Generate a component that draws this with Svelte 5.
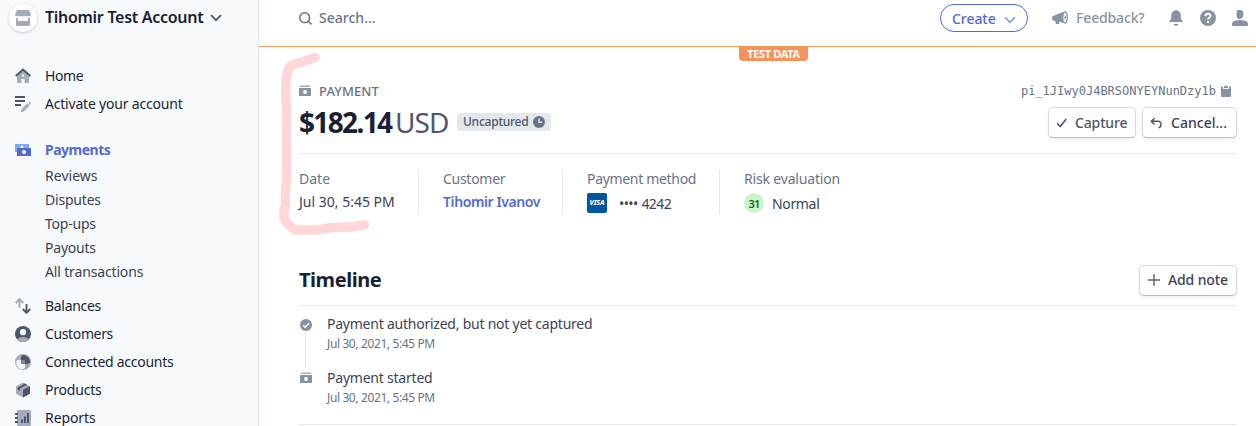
<script>
  const top = [
    { icon: 'home', label: 'Home', ls: -0.42 },
    { icon: 'edit', label: 'Activate your account', ls: -0.2 },
  ];
  const subs = [
    { label: 'Reviews', ls: 0.03 },
    { label: 'Disputes', ls: -0.2 },
    { label: 'Top-ups', ls: -0.22 },
    { label: 'Payouts', ls: -0.22 },
    { label: 'All transactions', ls: -0.15 },
  ];
  const rest = [
    { icon: 'balances', label: 'Balances', ls: -0.3 },
    { icon: 'customers', label: 'Customers', ls: -0.37 },
    { icon: 'connected', label: 'Connected accounts', ls: -0.27 },
    { icon: 'products', label: 'Products', ls: -0.2 },
    { icon: 'reports', label: 'Reports', ls: -0.08 },
  ];
  const events = [
    { icon: 'check', title: 'Payment authorized, but not yet captured', ls: -0.235 },
    { icon: 'cash', title: 'Payment started', ls: -0.22 },
  ];
</script>

{#snippet icon(name)}
  <svg class="icon" width="16" height="16" viewBox="0 0 16 16" fill="#a3acb9">
    {#if name === 'home'}
      <path d="M2 7.500 8 2l6 5.500V14a1 1 0 0 1-1 1H9.500v-4H6.500v4H3a1 1 0 0 1-1-1z" />
      <path d="M7 6.500h2v2H7z" fill="#f7fafc" />
      <path d="M.7 8 8 1.600 15.300 8" fill="none" stroke="#4f566b" stroke-width="1.900" />
    {:else if name === 'edit'}
      <path d="M0 0h10v2H0zM0 4h10v2H0zM0 8h6v2H0z" fill="#4f566b" />
      <path d="m6.500 13.300 6-6 2.200 2.200-6 6L6 16zM13.200 6.600l.8-.7q.5-.4 1 .1l.9.900q.4.500 0 1l-.7.800z" />
    {:else if name === 'payments'}
      <path d="M0 2h14v8H0z" fill="#7da8f7" />
      <circle cx="7" cy="5" r="1.500" fill="#f7fafc" />
      <rect x="2" y="6" width="14" height="8" rx=".6" fill="#5469d4" />
      <circle cx="9" cy="10" r="2" fill="#f7fafc" />
    {:else if name === 'balances'}
      <path d="M4.500 10V1.500M.7 5l3.800-3.800L8.300 5" fill="none" stroke="#a3acb9" stroke-width="1.900" />
      <path d="M11.500 6v8.500M7.700 11l3.800 3.800 3.800-3.800" fill="none" stroke="#4f566b" stroke-width="1.900" />
    {:else if name === 'customers'}
      <circle cx="8" cy="8" r="8" fill="#4f566b" />
      <path d="M2 13.300Q5 11 8 11t6 2.300A8 8 0 0 1 2 13.300" />
      <circle cx="8" cy="6.200" r="3.100" fill="#f7fafc" />
    {:else if name === 'connected'}
      <circle cx="8" cy="8" r="8" />
      <path d="M7.500 1a7 7 0 0 1 7.500 8Q12 10.500 10 10V6H6Q5.500 2.500 7.500 1" fill="#4f566b" />
      <path d="M1.200 7A5 5 0 0 1 6 6v4h4v4a5 5 0 0 1-4.500 1Q1 13 1.200 7" fill="#f7fafc" />
      <path d="M6 6h4v4H6z" fill="#7f879a" />
    {:else if name === 'products'}
      <path d="M1 4.300 8 .5l7 3.800v7.400L8 15.500l-7-3.800z" />
      <path d="M8 7.800 15 4v7.700l-7 3.900zM2.800 5.400 10 1.500l2.200 1.200L5 6.600v2.400L2.800 7.800z" fill="#4f566b" />
    {:else}
      <rect x="2" y="0" width="14" height="16" rx="1.500" />
      <path d="M6 9.500h2V13H6zM9 6.500h2V13H9zM12 3h2v10h-2zM0 3h3v2H0zM0 7h3v2H0zM0 11h3v2H0z" fill="#4f566b" />
    {/if}
  </svg>
{/snippet}

{#snippet cash()}
  <svg width="12" height="12" viewBox="0 0 12 12" fill="#8792a2">
    <path d="M.8.500h10.400V2H.8z" opacity=".75" />
    <path fill-rule="evenodd" d="M.6 3h10.800q.6 0 .6.600v6.800q0 .600-.6.600H.6q-.6 0-.6-.600V3.600Q0 3 .6 3M6 5a2 2 0 1 0 0 4 2 2 0 0 0 0-4" />
  </svg>
{/snippet}

{#snippet entry(item)}
  <a class="row">{@render icon(item.icon)}<span style:letter-spacing="{item.ls}px">{item.label}</span></a>
{/snippet}

<div class="page">
  <aside>
    <div class="account">
      <span class="logo">
        <svg width="16" height="16" viewBox="0 0 16 16" fill="#a3acb9">
          <path d="M2 0h12l2 4.500a2 2 0 0 1-3.300 1.300 2.300 2.300 0 0 1-3.100 0 2.300 2.300 0 0 1-3.200 0 2.300 2.300 0 0 1-3.100 0A2 2 0 0 1 0 4.500z" />
          <path d="M1 8h2v3h10V8h2v7a1 1 0 0 1-1 1H2a1 1 0 0 1-1-1z" />
        </svg>
      </span>
      <b>Tihomir Test Account</b>
      <svg width="12" height="8" viewBox="0 0 12 8" fill="none" stroke="#4f566b" stroke-width="1.700"><path d="m1 1.200 5 5 5-5" /></svg>
    </div>
    <nav>
      {#each top as item}{@render entry(item)}{/each}
      <a class="row active">{@render icon('payments')}<span>Payments</span></a>
      <div class="subs">
        {#each subs as s}<a style:letter-spacing="{s.ls}px">{s.label}</a>{/each}
      </div>
      {#each rest as item}{@render entry(item)}{/each}
    </nav>
  </aside>

  <main>
    <header>
      <div class="search">
        <svg width="13" height="13" viewBox="0 0 13 13" fill="none" stroke="#697386" stroke-width="1.500"><circle cx="5.700" cy="5.700" r="4.900" /><path d="m9.200 9.200 3.200 3.200" /></svg>
        <span>Search...</span>
      </div>
      <button class="create"><span>Create</span>
        <svg width="12" height="8" viewBox="0 0 12 8" fill="none" stroke="#6c8eef" stroke-width="1.400"><path d="m1 1.200 5 5 5-5" /></svg>
      </button>
      <div class="feedback">
        <svg width="16" height="14" viewBox="0 0 16 14" fill="#8792a2">
          <path d="M11 1v11L7 10.500l.5 2.500H4l-.8-3L.5 9Q-.3 7 .5 5.200z" />
          <ellipse cx="13" cy="6.500" rx="2.200" ry="5.500" fill="#fff" stroke="#8792a2" stroke-width="1.300" />
          <path d="M12.500 4.500q1.500 0 1.500 2t-1.500 2z" />
        </svg>
        <span>Feedback?</span>
      </div>
      <svg class="bell" width="14" height="16" viewBox="0 0 14 16" fill="#8792a2"><path d="M7 0a1.500 1.500 0 0 1 1.300.8A4.600 4.600 0 0 1 11.800 5v3.500l1.700 2.300q.5 1.200-.8 1.200H1.300q-1.300 0-.8-1.200l1.700-2.300V5A4.600 4.600 0 0 1 5.700.8 1.500 1.500 0 0 1 7 0M4.700 14h4.600Q8.500 16 7 16t-2.300-2" /></svg>
      <svg class="help" width="16" height="16" viewBox="0 0 16 16"><circle cx="8" cy="8" r="8" fill="#8792a2" /><path d="M5.400 6.200Q5.600 3.800 8 3.800t2.500 2.100Q10.500 7 9.200 7.700 8 8.400 8 9.500" fill="none" stroke="#fff" stroke-width="1.900" /><circle cx="8" cy="12" r="1.200" fill="#fff" /></svg>
      <svg width="16" height="16" viewBox="0 0 16 16" fill="#8792a2"><path d="M8 0q3.500 0 3.500 4T8 9 4.500 4 8 0M0 14q0-2.500 3-3.300Q8 9.500 13 10.700q3 .8 3 3.300v1q0 1-1 1H1q-1 0-1-1z" /></svg>
      <div class="test">TEST DATA</div>
    </header>

    <div class="content">
      <div class="kicker">
        {@render cash()}<span class="kind">PAYMENT</span>
        <code>pi_1JIwy0J4BRSONYEYNunDzy1b</code>
        <svg width="10" height="12" viewBox="0 0 10 12"><path d="M1 1.500h8q1 0 1 1V11q0 1-1 1H1q-1 0-1-1V2.500q0-1 1-1" fill="#8792a2" /><path d="M2 1v3h6V1" fill="#fff" /><path d="M3 1.200h1Q5-.8 6 1.200h1V3H3z" fill="#8792a2" /></svg>
      </div>
      <div class="amount">
        <strong>$182.14</strong><span class="usd">USD</span>
        <span class="badge"><span>Uncaptured</span>
          <svg width="12" height="12" viewBox="0 0 12 12"><circle cx="6" cy="6" r="6" fill="#697386" /><path d="M6 2.500v3.700h3" fill="none" stroke="#e3e8ee" stroke-width="1.500" /></svg>
        </span>
        <button class="btn capture">
          <svg width="12" height="12" viewBox="0 0 12 12" fill="none" stroke="#4f566b" stroke-width="1.700"><path d="m1.300 6.200 2.900 3.300L10.300 2" /></svg>
          <span>Capture</span>
        </button>
        <button class="btn cancel">
          <svg width="12" height="12" viewBox="0 0 12 12" fill="none" stroke="#4f566b" stroke-width="1.500"><path d="M4.500 1.200 1.300 4.300l3.200 3.200M1.300 4.300h6.400q3.300 0 3.300 3.200v0q0 2.700-2.500 3.200" /></svg>
          <span>Cancel...</span>
        </button>
      </div>

      <div class="facts">
        <div class="fact date"><span class="name">Date</span><span class="val">Jul 30, 5:45 PM</span></div>
        <div class="fact customer"><span class="name">Customer</span><b>Tihomir Ivanov</b></div>
        <div class="fact method"><span class="name">Payment method</span>
          <div class="line"><span class="visa">VISA</span><span class="val">•••• 4242</span></div></div>
        <div class="fact risk"><span class="name">Risk evaluation</span>
          <div class="line"><span class="score">31</span><span class="val">Normal</span></div></div>
      </div>

      <div class="timeline-head">
        <h2>Timeline</h2>
        <button class="btn note">
          <svg width="12" height="12" viewBox="0 0 12 12" fill="none" stroke="#5b6278" stroke-width="1.400"><path d="M0 6h12M6 0v12" /></svg>
          <span>Add note</span>
        </button>
      </div>
      <div class="events">
        {#each events as e, i}
          <div class="event">
            <div class="rail">
              {#if e.icon === 'check'}
                <svg width="12" height="12" viewBox="0 0 12 12"><circle cx="6" cy="6" r="6" fill="#8792a2" /><path d="m3.200 6.200 2 2 3.800-4" fill="none" stroke="#fff" stroke-width="1.600" /></svg>
              {:else}{@render cash()}{/if}
              {#if i === 0}<i></i>{/if}
            </div>
            <div class="text"><span style:letter-spacing="{e.ls}px">{e.title}</span><time>Jul 30, 2021, 5:45 PM</time></div>
          </div>
        {/each}
      </div>
    </div>
  </main>

  <svg class="marker" width="100" height="190" viewBox="276 50 100 190" fill="none" stroke="#ffd7d8" stroke-width="9.500" stroke-linecap="round" stroke-linejoin="round">
    <path d="M315 57.500 308 60 291 65.500 287.500 71 286 80 285.700 98 286.500 103V184L285.500 190V205L284 211V218L288 224 295 230H316L332 227.500 352 227 360 226 364.500 224.500" />
  </svg>
</div>

<style>
  :global(body) { background: #fff; overflow: hidden; }
  .page { display: flex; position: relative; width: 1256px; height: 426px; overflow: hidden; font: 14px/20px 'Noto Sans', sans-serif; color: #3c4257; }
  svg { display: block; flex: none; }
  span, b, code, a { white-space: nowrap; }
  button { font: inherit; color: inherit; }
  .marker { position: absolute; left: 276px; top: 50px; pointer-events: none; }
  aside { box-sizing: border-box; flex: none; width: 259px; background: #f7fafc; border-right: 1px solid #e3e8ee; color: #1a1f36; }
  .account { display: flex; align-items: center; height: 36px; padding-left: 9px; }
  .logo { display: grid; place-items: center; width: 28px; height: 28px; margin-top: -1px; border-radius: 50%; background: #fff; box-shadow: 0 1px 3px rgba(60, 66, 87, .25); }
  .account b { width: 157px; margin: -2px 8px 0; font-size: 16px; font-weight: 580; letter-spacing: -.29px; }
  .account > svg { margin-top: -1px; }
  nav { padding-top: 26px; }
  .row { display: flex; align-items: center; gap: 14px; height: 28px; padding-left: 15px; }
  .active { margin-top: 18px; color: #5469d4; font-weight: 700; letter-spacing: -.5px; }
  .subs { display: grid; grid-auto-rows: 24px; align-items: center; padding: 0 0 8px 45px; color: #3c4257; }
  .icon { margin-top: -1px; }
  main { flex: 1; min-width: 0; }
  header { display: flex; align-items: center; position: relative; box-sizing: border-box; height: 47px; padding: 0 8px 10px 0; border-bottom: 1px solid #f5925e; color: #697386; font-weight: 500; }
  .search { display: flex; align-items: center; gap: 7px; margin: 0 auto 0 40px; letter-spacing: .02px; }
  .create { display: flex; align-items: center; justify-content: space-between; box-sizing: border-box; width: 88px; height: 28px; padding: 2px 11px 0; border: 1px solid #5469d4; border-radius: 14px; background: #fff; color: #5469d4; font-weight: 550; letter-spacing: -.06px; }
  .create svg { margin-top: 2px; }
  .feedback { display: flex; align-items: center; gap: 8px; width: 92px; margin-left: 24px; color: #8792a2; letter-spacing: -.15px; }
  .bell { margin-left: 25px; }
  .help { margin: 0 16px 0 17px; }
  .test { position: absolute; left: 480px; top: 46px; width: 69px; height: 15px; border-radius: 0 0 4px 4px; background: #f5925e; color: #fff; font-size: 11px; font-weight: 700; line-height: 16px; letter-spacing: -.35px; text-align: center; }
  .content { padding: 33px 20px 0 40px; }
  .kicker { display: flex; align-items: center; height: 22px; padding-right: 5px; color: #697386; }
  .kicker svg { margin-top: -1px; }
  .kind { margin: -1px auto 0 8px; font-size: 13px; font-weight: 500; letter-spacing: .1px; }
  code { margin-right: 5px; font: 12px 'DejaVu Sans Mono', monospace; }
  .amount { display: flex; align-items: center; height: 41px; padding-bottom: 10px; border-bottom: 1px solid #e3e8ee; }
  strong { width: 96px; margin-top: -2px; color: #1a1f36; font-size: 28px; letter-spacing: -1.65px; }
  .usd { width: 62px; margin-top: -2px; color: #4f566b; font-size: 28px; font-weight: 370; letter-spacing: -.95px; }
  .badge { display: flex; align-items: center; justify-content: space-between; box-sizing: border-box; width: 94px; height: 18px; margin: -1px auto 0 0; padding: 0 6px; border-radius: 4px; background: #e3e8ee; color: #4f566b; font-size: 12px; font-weight: 500; letter-spacing: -.24px; }
  .btn { display: flex; align-items: center; box-sizing: border-box; height: 29px; padding: 0 7px; border: 0; border-radius: 4px; background: #fff; box-shadow: 0 0 0 1px rgba(60, 66, 87, .17), 0 1px 1px rgba(0, 0, 0, .14), 0 2px 5px rgba(60, 66, 87, .09); font-weight: 500; }
  .capture { width: 86px; margin-right: 8px; color: #4f566b; gap: 7px; letter-spacing: -.15px; }
  .cancel { width: 93px; gap: 9px; letter-spacing: .02px; }
  .note { width: 96px; gap: 9px; letter-spacing: -.12px; }
  .note svg { margin-left: 1px; margin-right: -1px; }
  .facts { display: flex; height: 45px; padding-top: 16px; }
  .fact { display: flex; flex-direction: column; gap: 3px; box-sizing: border-box; height: 44px; padding-right: 23px; margin-right: 24px; border-right: 1px solid #e3e8ee; }
  .name { margin-top: -1px; color: #697386; }
  .date { width: 120px; }
  .customer { width: 120px; letter-spacing: -.28px; }
  .customer b { color: #5469d4; font-weight: 580; letter-spacing: -.4px; }
  .method { width: 133px; gap: 4px; letter-spacing: -.32px; }
  .method .val { letter-spacing: -.58px; word-spacing: .6px; }
  .risk { gap: 4px; border: 0; letter-spacing: -.17px; }
  .risk .val { letter-spacing: -.34px; }
  .line { display: flex; align-items: center; gap: 8px; height: 20px; }
  .line .val { padding-top: 2px; }
  .score { padding-top: 1px; box-sizing: border-box; line-height: 19px; }
  .method .line { gap: 12px; }
  .visa { width: 20px; height: 20px; border-radius: 2px; background: #00579f; color: #fff; font-size: 7px; font-weight: 800; font-style: italic; line-height: 20px; text-align: center; letter-spacing: -.1px; }
  .score { width: 20px; height: 20px; border-radius: 50%; background: #cbf4c9; color: #0e6245; font-size: 11px; font-weight: 600; text-align: center; letter-spacing: -.9px; }
  .timeline-head { display: flex; align-items: center; justify-content: space-between; height: 51px; margin-top: 39px; border-bottom: 1px solid #e3e8ee; }
  .timeline-head .btn { margin-top: 1px; }
  h2 { margin: 0; color: #1a1f36; font-size: 20px; font-weight: 700; letter-spacing: -.45px; }
  .events { height: 110px; padding-top: 8px; border-bottom: 1px solid #e3e8ee; }
  .event { display: flex; gap: 15px; height: 54px; }
  .rail { display: flex; flex-direction: column; align-items: center; width: 13px; padding-top: 5px; }
  .event:last-child .rail { padding-top: 4px; }
  .rail i { width: 1px; height: 38px; margin-top: 1px; background: #e3e8ee; }
  .text { display: flex; flex-direction: column; }
  time { margin-top: 1px; color: #697386; font-size: 12px; line-height: 18px; letter-spacing: -.38px; }
</style>
